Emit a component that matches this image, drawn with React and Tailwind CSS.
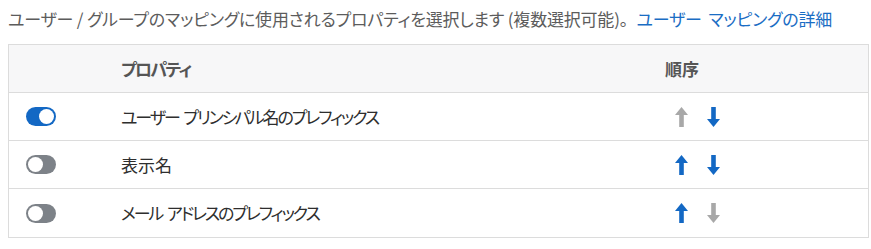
import React from "react";

const font = {
  fontFamily: '"Noto Sans CJK JP", "Noto Sans", sans-serif',
};

function Toggle({ on }) {
  return (
    <div
      className={
        "flex h-[19px] w-[30px] items-center rounded-full px-[2px] " +
        (on ? "justify-end bg-[#1368c4]" : "justify-start bg-[#7d8288]")
      }
    >
      <div className="h-[15px] w-[15px] rounded-full bg-white" />
    </div>
  );
}

function Arrow({ dir, active }) {
  const color = active ? "#1368c4" : "#a8a8a8";
  return (
    <svg width="13" height="20" viewBox="0 0 13 20" className={dir === "down" ? "rotate-180" : ""}>
      <path d="M6.5 0 L13 8 L8.8 8 L8.8 20 L4.2 20 L4.2 8 L0 8 Z" fill={color} />
    </svg>
  );
}

const rows = [
  { name: "ユーザー プリンシパル名のプレフィックス", on: true, up: false, down: true, tight: true },
  { name: "表示名", on: false, up: true, down: true, tight: false },
  { name: "メール アドレスのプレフィックス", on: false, up: true, down: false, tight: true },
];

export default function App() {
  return (
    <div className="w-[871px] h-[249px] bg-white pl-2 pr-[2px] [font-feature-settings:'palt']" style={font}>
      <div className="flex h-[44px] items-start pt-[7px] text-[17px] leading-[24px] text-[#5c5c5c] whitespace-pre tracking-[-0.2px]">
        <span>ユーザー / グループのマッピングに使用されるプロパティを選択します (複数選択可能)</span>
        <span className="[font-feature-settings:normal]">。</span>
        <span className="text-[#1a6dc4] [word-spacing:3px]">ユーザー マッピングの詳細</span>
      </div>
      <div className="border border-[#dcdcdc]">
        <div className="grid h-[48px] grid-cols-[112px_544px_1fr] items-center border-b border-[#dcdcdc] bg-[#f7f7f8] text-[17px] font-bold text-[#555]">
          <div />
          <div className="tracking-[-1.8px]">プロパティ</div>
          <div>順序</div>
        </div>
        {rows.map((r, i) => (
          <div
            key={i}
            className={
              "grid h-[48px] grid-cols-[112px_544px_1fr] items-center text-[17px] text-[#2e2e2e] " +
              (i < rows.length - 1 ? "border-b border-[#dcdcdc]" : "")
            }
          >
            <div className="pl-[17px]">
              <Toggle on={r.on} />
            </div>
            <div className={r.tight ? "tracking-[-2.1px] [word-spacing:3px]" : ""}>{r.name}</div>
            <div className="flex items-center gap-[19px] pl-[10px]">
              <Arrow dir="up" active={r.up} />
              <Arrow dir="down" active={r.down} />
            </div>
          </div>
        ))}
      </div>
    </div>
  );
}
